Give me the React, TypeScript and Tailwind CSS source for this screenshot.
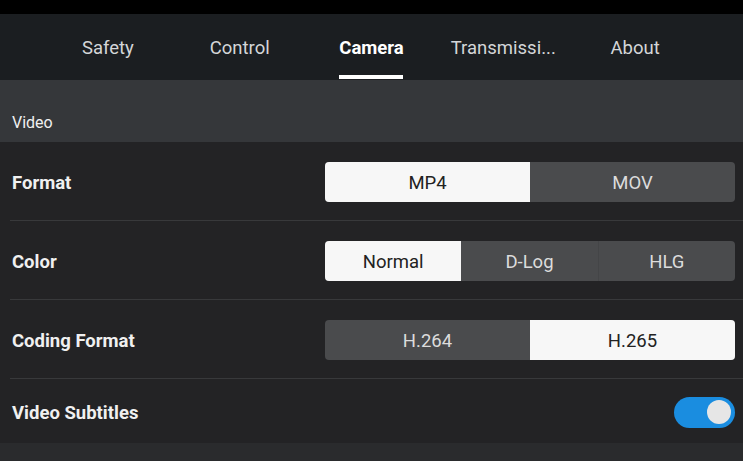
import { useState } from 'react'

const tabs = ['Safety', 'Control', 'Camera', 'Transmissi...', 'About']

const Segmented = ({ options, value, onChange }: { options: string[]; value: string; onChange: (v: string) => void }) => (
  <div className="flex w-[410px] h-10 rounded-[4px] overflow-hidden bg-[#4a4b4d]">
    {options.map((o, i) => (
      <button
        key={o}
        onClick={() => onChange(o)}
        className={`flex-1 flex items-center justify-center pt-[3px] text-[18.5px] ${
          o === value ? 'bg-[#f7f7f7] text-[#222]' : 'text-[#dcdcdc]'
        } ${i > 0 && o !== value && options[i - 1] !== value ? 'border-l border-[#444547]' : ''}`}
      >
        {o}
      </button>
    ))}
  </div>
)

const Row = ({ label, children, last }: { label: string; children: React.ReactNode; last?: boolean }) => (
  <div className={`flex items-center justify-between pr-2 ml-[10px] pt-[2px] ${last ? 'h-[64px]' : 'h-[79px] border-b border-[#38393b]'}`}>
    <span className="pl-[2px] pt-[3px] text-[18.5px] font-bold text-[#f0f0f0]">{label}</span>
    {children}
  </div>
)

export default function App() {
  const [format, setFormat] = useState('MP4')
  const [color, setColor] = useState('Normal')
  const [coding, setCoding] = useState('H.265')
  const [subs, setSubs] = useState(true)

  return (
    <div className="w-[743px] h-[461px] overflow-hidden bg-[#232325] flex flex-col" style={{ fontFamily: 'Roboto, "Noto Sans", sans-serif' }}>
      <div className="h-[14px] bg-black" />
      <div className="h-[66px] bg-[#1b1e21] grid grid-cols-5 px-[42px]">
        {tabs.map((t) => (
          <div key={t} className="relative flex items-center justify-center pt-[4px]">
            <span className={`text-[18.5px] ${t === 'Camera' ? 'font-bold text-white' : 'text-[#d4d6d8]'}`}>{t}</span>
            {t === 'Camera' && <div className="absolute bottom-[1px] h-[4px] w-16 bg-white" />}
          </div>
        ))}
      </div>
      <div className="h-[62px] bg-[#35373a] flex items-start px-3 pt-[33px]">
        <span className="text-[16px] leading-[19px] text-[#f0f0f0]">Video</span>
      </div>
      <Row label="Format">
        <Segmented options={['MP4', 'MOV']} value={format} onChange={setFormat} />
      </Row>
      <Row label="Color">
        <Segmented options={['Normal', 'D-Log', 'HLG']} value={color} onChange={setColor} />
      </Row>
      <Row label="Coding Format">
        <Segmented options={['H.264', 'H.265']} value={coding} onChange={setCoding} />
      </Row>
      <Row label="Video Subtitles" last>
        <button
          onClick={() => setSubs(!subs)}
          className={`w-[61px] h-[31px] rounded-full flex items-center px-[4px] ${subs ? 'bg-[#1a8de0] justify-end' : 'bg-[#555] justify-start'}`}
        >
          <span className="w-[24px] h-[24px] rounded-full bg-[#e6e6e6]" />
        </button>
      </Row>
      <div className="flex-1 bg-[#2a2b2d]" />
    </div>
  )
}
